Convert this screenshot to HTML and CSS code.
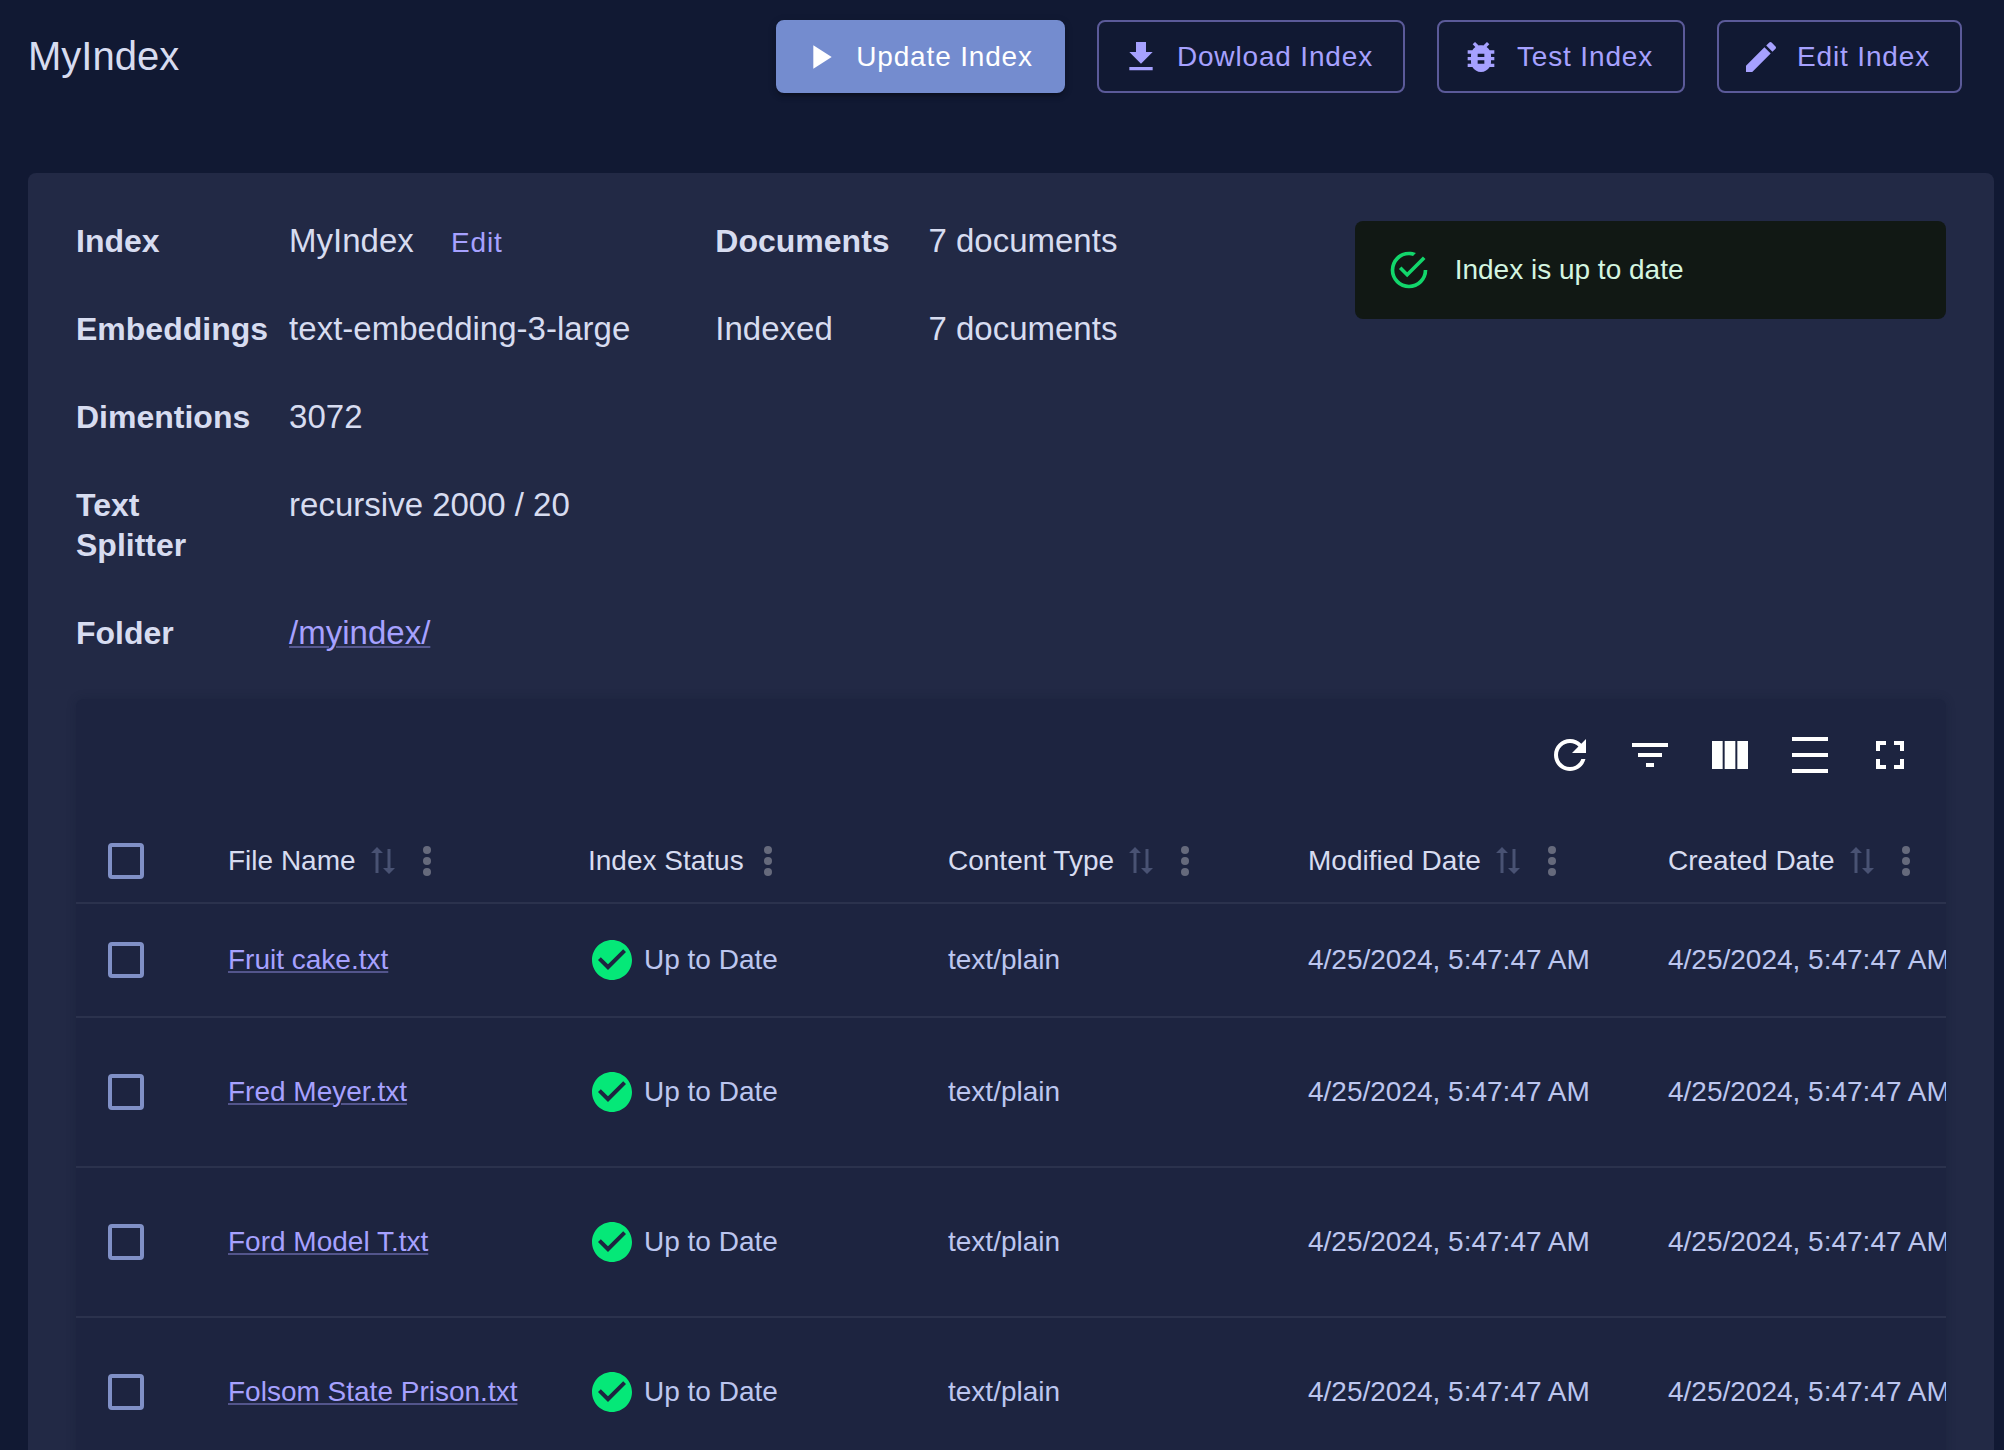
FILE: index.html
```html
<!DOCTYPE html>
<html lang="en">
<head>
<meta charset="utf-8">
<title>MyIndex</title>
<link rel="stylesheet" href="styles.css">
</head>
<body>
<svg class="sprite" aria-hidden="true">
  <symbol id="play" viewBox="0 0 24 24"><path d="M8 5v14l11-7z"/></symbol>
  <symbol id="download" viewBox="0 0 24 24"><path d="M19 9h-4V3H9v6H5l7 7zM5 18v2h14v-2z"/></symbol>
  <symbol id="bug" viewBox="0 0 24 24"><path d="M20 8h-2.81c-.45-.78-1.07-1.45-1.82-1.96L17 4.41 15.59 3l-2.17 2.17C12.96 5.06 12.49 5 12 5s-.96.06-1.41.17L8.41 3 7 4.41l1.62 1.63C7.88 6.55 7.26 7.22 6.81 8H4v2h2.09c-.05.33-.09.66-.09 1v1H4v2h2v1c0 .34.04.67.09 1H4v2h2.81c1.04 1.79 2.97 3 5.19 3s4.15-1.21 5.19-3H20v-2h-2.09c.05-.33.09-.66.09-1v-1h2v-2h-2v-1c0-.34-.04-.67-.09-1H20zm-6 8h-4v-2h4zm0-4h-4v-2h4z"/></symbol>
  <symbol id="pencil" viewBox="0 0 24 24"><path d="M3 17.25V21h3.75L17.81 9.94l-3.75-3.75zM20.71 7.04c.39-.39.39-1.02 0-1.41l-2.34-2.34a.9959.9959 0 0 0-1.41 0l-1.83 1.83 3.75 3.75z"/></symbol>
  <symbol id="success" viewBox="0 0 24 24"><path d="M20,12A8,8 0 0,1 12,20A8,8 0 0,1 4,12A8,8 0 0,1 12,4C12.76,4 13.5,4.11 14.2,4.31L15.77,2.74C14.61,2.26 13.34,2 12,2A10,10 0 0,0 2,12A10,10 0 0,0 12,22A10,10 0 0,0 22,12M7.91,10.08L6.5,11.5L11,16L21,6L19.59,4.58L11,13.17L7.91,10.08Z"/></symbol>
  <symbol id="refresh" viewBox="0 0 24 24"><path d="M17.65 6.35C16.2 4.9 14.21 4 12 4c-4.42 0-7.99 3.58-7.99 8s3.57 8 7.99 8c3.73 0 6.84-2.55 7.73-6h-2.08c-.82 2.33-3.04 4-5.65 4-3.31 0-6-2.69-6-6s2.69-6 6-6c1.66 0 3.14.69 4.22 1.78L13 11h7V4z"/></symbol>
  <symbol id="filter" viewBox="0 0 24 24"><path d="M10 18h4v-2h-4zM3 6v2h18V6zm3 7h12v-2H6z"/></symbol>
  <symbol id="columns" viewBox="0 0 24 24"><path d="M14.67 5v14H9.33V5zm1 14H21V5h-5.33zm-7.34 0V5H3v14z"/></symbol>
  <symbol id="density" viewBox="0 0 24 24"><path d="M3 3h18v2H3zM3 11h18v2H3zM3 19h18v2H3z"/></symbol>
  <symbol id="fullscreen" viewBox="0 0 24 24"><path d="M7 14H5v5h5v-2H7zm-2-4h2V7h3V5H5zm12 7h-3v2h5v-5h-2zM14 5v2h3v3h2V5z"/></symbol>
  <symbol id="sort" viewBox="0 0 24 27"><path d="M6 0l6 6H7.500v20h-3V6H0zM18 27l6-6h-4.500V2h-3v19H12z"/></symbol>
  <symbol id="dots" viewBox="0 0 8 30"><circle cx="4" cy="4" r="4"/><circle cx="4" cy="15" r="4"/><circle cx="4" cy="26" r="4"/></symbol>
  <symbol id="check" viewBox="0 0 24 24"><path d="M12 2C6.480 2 2 6.480 2 12s4.480 10 10 10 10-4.480 10-10S17.520 2 12 2zm-2 15l-5-5 1.410-1.410L10 14.170l7.590-7.590L19 8l-9 9z"/></symbol>
</svg>

<header class="page-header">
  <h1 class="title">MyIndex</h1>
  <div class="actions">
    <button class="btn btn-primary" type="button"><svg><use href="#play"/></svg>Update Index</button>
    <button class="btn" type="button"><svg><use href="#download"/></svg>Dowload Index</button>
    <button class="btn" type="button"><svg><use href="#bug"/></svg>Test Index</button>
    <button class="btn" type="button"><svg><use href="#pencil"/></svg>Edit Index</button>
  </div>
</header>

<main class="card">
  <section class="summary">
    <dl class="facts">
      <dt>Index</dt><dd>MyIndex <button class="edit" type="button">Edit</button></dd>
      <dt>Embeddings</dt><dd>text-embedding-3-large</dd>
      <dt>Dimentions</dt><dd>3072</dd>
      <dt>Text Splitter</dt><dd>recursive 2000 / 20</dd>
      <dt>Folder</dt><dd><a class="link" href="#folder">/myindex/</a></dd>
    </dl>
    <dl class="facts">
      <dt>Documents</dt><dd>7 documents</dd>
      <dt class="plain">Indexed</dt><dd>7 documents</dd>
    </dl>
    <div class="alert" role="status"><svg><use href="#success"/></svg>Index is up to date</div>
  </section>

  <section class="files">
    <div class="toolbar">
      <button class="tool" type="button" aria-label="Refresh"><svg><use href="#refresh"/></svg></button>
      <button class="tool" type="button" aria-label="Show filters"><svg><use href="#filter"/></svg></button>
      <button class="tool" type="button" aria-label="Show columns"><svg><use href="#columns"/></svg></button>
      <button class="tool" type="button" aria-label="Toggle density"><svg><use href="#density"/></svg></button>
      <button class="tool" type="button" aria-label="Full screen"><svg><use href="#fullscreen"/></svg></button>
    </div>
    <table class="grid">
      <colgroup><col class="col-select"><col><col><col><col><col></colgroup>
      <thead>
        <tr>
          <th class="select"><input class="box" type="checkbox" aria-label="Select all"></th>
          <th><div class="head">File Name<button class="sort" type="button" aria-label="Sort by file name"><svg><use href="#sort"/></svg></button><button class="more" type="button" aria-label="File name actions"><svg><use href="#dots"/></svg></button></div></th>
          <th><div class="head">Index Status<button class="more" type="button" aria-label="Index status actions"><svg><use href="#dots"/></svg></button></div></th>
          <th><div class="head">Content Type<button class="sort" type="button" aria-label="Sort by content type"><svg><use href="#sort"/></svg></button><button class="more" type="button" aria-label="Content type actions"><svg><use href="#dots"/></svg></button></div></th>
          <th><div class="head">Modified Date<button class="sort" type="button" aria-label="Sort by modified date"><svg><use href="#sort"/></svg></button><button class="more" type="button" aria-label="Modified date actions"><svg><use href="#dots"/></svg></button></div></th>
          <th><div class="head">Created Date<button class="sort" type="button" aria-label="Sort by created date"><svg><use href="#sort"/></svg></button><button class="more" type="button" aria-label="Created date actions"><svg><use href="#dots"/></svg></button></div></th>
        </tr>
      </thead>
      <tbody>
        <tr class="compact">
          <td class="select"><input class="box" type="checkbox" aria-label="Select Fruit cake.txt"></td>
          <td><a class="link" href="#fruit-cake">Fruit cake.txt</a></td>
          <td><div class="status"><svg><use href="#check"/></svg>Up to Date</div></td>
          <td>text/plain</td><td>4/25/2024, 5:47:47 AM</td><td>4/25/2024, 5:47:47 AM</td>
        </tr>
        <tr>
          <td class="select"><input class="box" type="checkbox" aria-label="Select Fred Meyer.txt"></td>
          <td><a class="link" href="#fred-meyer">Fred Meyer.txt</a></td>
          <td><div class="status"><svg><use href="#check"/></svg>Up to Date</div></td>
          <td>text/plain</td><td>4/25/2024, 5:47:47 AM</td><td>4/25/2024, 5:47:47 AM</td>
        </tr>
        <tr>
          <td class="select"><input class="box" type="checkbox" aria-label="Select Ford Model T.txt"></td>
          <td><a class="link" href="#ford-model-t">Ford Model T.txt</a></td>
          <td><div class="status"><svg><use href="#check"/></svg>Up to Date</div></td>
          <td>text/plain</td><td>4/25/2024, 5:47:47 AM</td><td>4/25/2024, 5:47:47 AM</td>
        </tr>
        <tr>
          <td class="select"><input class="box" type="checkbox" aria-label="Select Folsom State Prison.txt"></td>
          <td><a class="link" href="#folsom">Folsom State Prison.txt</a></td>
          <td><div class="status"><svg><use href="#check"/></svg>Up to Date</div></td>
          <td>text/plain</td><td>4/25/2024, 5:47:47 AM</td><td>4/25/2024, 5:47:47 AM</td>
        </tr>
      </tbody>
    </table>
  </section>
</main>
</body>
</html>
```

FILE: styles.css
```css
* { box-sizing: border-box; }

body {
  margin: 0;
  height: 100vh;
  overflow: hidden;
  padding: 20px 10px 0 28px;
  background: #111933;
  color: #d7dcf0;
  font-family: "Liberation Sans", Arial, sans-serif;
  font-size: 28px;
}

.sprite { display: none; }
svg { fill: currentColor; flex: none; display: block; }

button {
  font: inherit;
  color: inherit;
  background: none;
  border: 0;
  padding: 0;
  cursor: pointer;
}

.page-header {
  display: flex;
  align-items: center;
  justify-content: space-between;
  padding-right: 32px;
  margin-bottom: 80px;
}

.title { margin: 0; font-size: 40px; font-weight: 400; }

.actions { display: flex; gap: 32px; }

.btn {
  display: flex;
  align-items: center;
  gap: 16px;
  height: 73px;
  padding: 0 30px 0 22px;
  border: 2px solid #5b5a99;
  border-radius: 8px;
  color: #a6a1ff;
  letter-spacing: 0.03em;
  white-space: nowrap;
}
.btn svg { width: 40px; height: 40px; }

.btn-primary {
  background: #748ccf;
  border-color: #748ccf;
  color: #fff;
  box-shadow: 0 6px 2px -4px rgba(0, 0, 0, .2), 0 4px 4px rgba(0, 0, 0, .14), 0 2px 10px rgba(0, 0, 0, .12);
}

.card {
  padding: 48px;
  border-radius: 8px;
  background: #222945;
}

.summary {
  display: grid;
  grid-template-columns: repeat(3, 1fr);
  gap: 48px;
  align-items: start;
  margin-bottom: 46px;
}

.facts {
  display: grid;
  grid-template-columns: repeat(3, minmax(0, 1fr));
  gap: 48px;
  margin: 0;
  font-size: 33px;
  line-height: 40px;
}
.facts dt { font-size: 32px; font-weight: 700; }
.facts .plain { font-size: 33px; font-weight: 400; }
.facts dd { grid-column: span 2; margin: 0; white-space: nowrap; }

.edit {
  margin-left: 28px;
  font-size: 28px;
  line-height: 32px;
  letter-spacing: 0.03em;
  color: #a6a1ff;
}

.link {
  color: #a6a1ff;
  text-decoration: underline 2px rgba(166, 161, 255, .4);
  text-underline-offset: 2px;
}

.alert {
  display: flex;
  align-items: center;
  gap: 24px;
  min-height: 98px;
  padding: 12px 32px;
  border-radius: 8px;
  background: #111814;
  color: #d4f5e0;
}
.alert svg { width: 44px; height: 44px; color: #12d66b; }

.files {
  overflow: hidden;
  border-radius: 8px;
  background: #1d2440;
  box-shadow: 0 0 10px rgba(17, 25, 51, .3);
}

.toolbar {
  display: flex;
  justify-content: flex-end;
  padding: 16px;
  color: #fff;
}
.tool { display: grid; place-items: center; width: 80px; height: 80px; }
.tool svg { width: 48px; height: 48px; }

.grid {
  width: 100%;
  min-width: 1920px;
  table-layout: fixed;
  border-collapse: separate;
  border-spacing: 0;
  color: #bcc6ef;
}
.col-select { width: 120px; }

.grid th,
.grid td {
  padding: 0 32px;
  height: 150px;
  border-bottom: 2px solid #2b324d;
  text-align: left;
  font-weight: 400;
  white-space: nowrap;
}
.grid .compact td { height: 114px; }
.grid th { height: 93px; padding-top: 8px; color: #d7dcf0; }
.grid .select { padding-right: 0; }

.head { display: flex; align-items: center; height: 48px; }
.sort,
.more { display: grid; place-items: center; height: 48px; }
.sort { width: 40px; margin-left: 7px; color: #495273; }
.sort svg { width: 24px; height: 27px; }
.more { width: 48px; color: #666a7c; }
.more svg { width: 8px; height: 30px; }

.box {
  appearance: none;
  display: block;
  width: 36px;
  height: 36px;
  margin: 0;
  border: 4px solid #8090c6;
  border-radius: 4px;
}

.status { display: flex; align-items: center; gap: 8px; }
.status svg { width: 48px; height: 48px; color: #05e878; }
```
